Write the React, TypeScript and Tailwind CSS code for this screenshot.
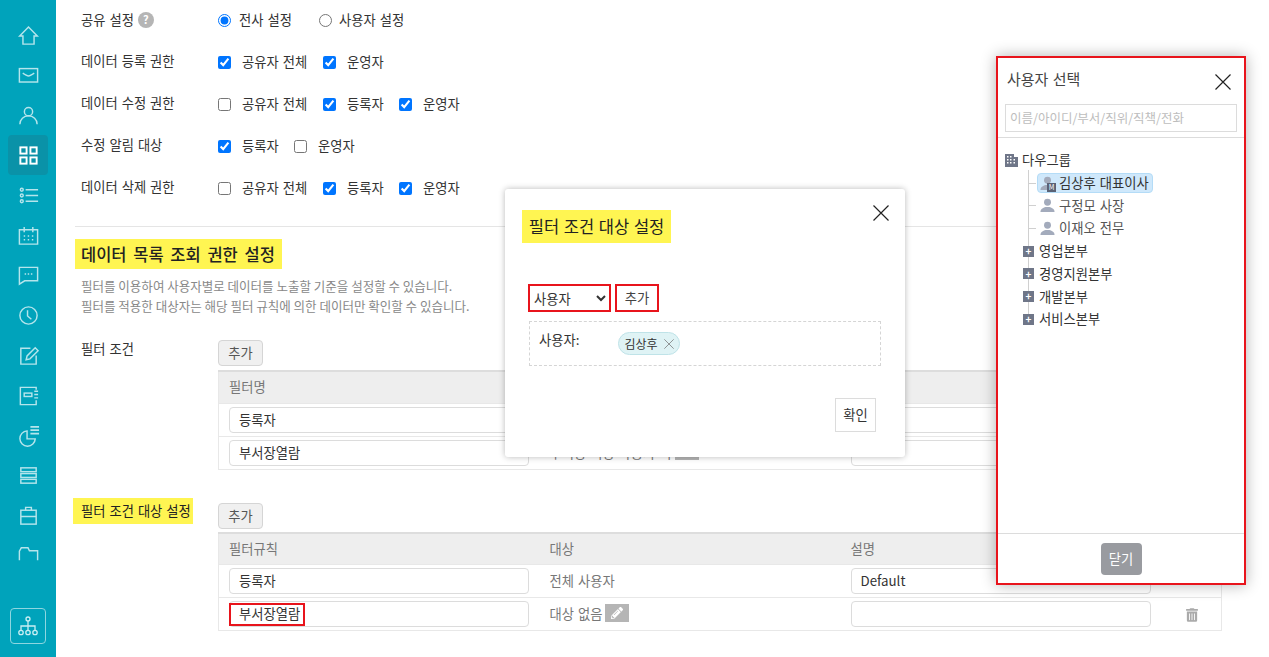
import React from "react";
import { FaTrashAlt, FaPencilAlt } from "react-icons/fa";

const Home = () => <path d="M12 3.2 2.8 12.6H6.2V21H17.8V12.6H21.2Z" />;
const Mail = () => (
  <>
    <rect x="2.5" y="4.8" width="19" height="14" />
    <path d="M6 9.5c3 2 4.5 3 6 3s3-1 6-3" />
  </>
);
const User = () => (
  <>
    <circle cx="12" cy="8" r="4.3" />
    <path d="M3 21c0-5 4-8.700 9-8.700s9 3.700 9 8.700" />
  </>
);
const Grid = () => (
  <g strokeWidth="2">
    <rect x="3.500" y="3.500" width="6.500" height="6.500" />
    <rect x="14" y="3.500" width="6.500" height="6.500" />
    <rect x="3.500" y="14" width="6.500" height="6.500" />
    <rect x="14" y="14" width="6.500" height="6.500" />
  </g>
);
const List = () => (
  <>
    <circle cx="5" cy="6" r="1.500" />
    <circle cx="5" cy="12" r="1.500" />
    <circle cx="5" cy="18" r="1.500" />
    <path d="M9 6H22M9 12H22M9 18H22" />
  </>
);
const Calendar = () => (
  <>
    <path d="M2.500 6H21.500V21H2.500ZM7.500 3V8.500M16.500 3V8.500" />
    <path d="M7 12.500h1.500M11.200 12.500h1.500M15.500 12.500h1.500M7 16.500h1.500M11.200 16.500h1.500M15.500 16.500h1.500" />
  </>
);
const Chat = () => (
  <>
    <path d="M2.500 3.500H21.500V17.500H8L2.500 21Z" />
    <path d="M8 10.500h1.500M11.200 10.500h1.500M14.500 10.500h1.500" />
  </>
);
const Clock = () => (
  <>
    <circle cx="12" cy="12" r="9" />
    <path d="M11 6.500V12.500L15 16" />
  </>
);
const Edit = () => (
  <>
    <path d="M14 4.500H4V21H20V12" />
    <path d="M9.500 16.500 10.500 12.500 19 4 22 7 13.500 15.500Z" />
  </>
);
const Note = () => (
  <>
    <path d="M20 6V3.500H3.500V21.500H20V17" />
    <rect x="7.500" y="9.500" width="8" height="3.500" />
    <path d="M18 7.500H22M18 11H22M18 14.500H22" />
  </>
);
const Pie = () => (
  <>
    <path d="M10.500 7.200A8 8 0 1 0 19 15.500H10.500Z" />
    <path d="M14 3H23M14 6.500H23M14 10H23" strokeWidth="1.800" />
  </>
);
const Stack = () => (
  <>
    <rect x="4" y="4" width="16" height="4" />
    <rect x="4" y="10" width="16" height="4" />
    <rect x="4" y="16" width="16" height="4" />
  </>
);
const Case = () => (
  <>
    <rect x="4" y="6.500" width="16" height="14.500" />
    <path d="M9 6.500V3.500H15V6.500M4 13H20" />
  </>
);
const Folder = () => <path d="M2.500 17V7.500L4.500 4H11.500L13 7H21.500V17" />;

const NAV = [
  { Icon: Home },
  { Icon: Mail },
  { Icon: User },
  { Icon: Grid, active: true },
  { Icon: List },
  { Icon: Calendar },
  { Icon: Chat },
  { Icon: Clock },
  { Icon: Edit },
  { Icon: Note },
  { Icon: Pie },
  { Icon: Stack },
  { Icon: Case },
  { Icon: Folder },
];

function Sidebar() {
  return (
    <nav className="w-14 h-full shrink-0 bg-[#00a3bb] flex flex-col items-center pt-[15px]">
      {NAV.map(({ Icon, active }, i) => (
        <div
          key={i}
          className={
            active
              ? "w-10 h-10 shrink-0 flex items-center justify-center rounded bg-[#0a92a8] text-white"
              : "w-10 h-10 shrink-0 flex items-center justify-center text-[#b5e5ec]"
          }
        >
          <svg viewBox="0 0 24 24" fill="none" stroke="currentColor" strokeWidth="1.500" className="w-[23px] h-[23px]">
            <Icon />
          </svg>
        </div>
      ))}
      {/* org chart button */}
      <div className="mt-auto mb-[13px] w-9 h-9 rounded border border-[#8ed6e0] flex items-center justify-center text-[#c8eef3]">
        <svg viewBox="0 0 24 24" fill="none" stroke="currentColor" strokeWidth="1.300" className="w-6 h-6">
          <circle cx="12" cy="5" r="2" />
          <circle cx="5" cy="18.500" r="2.200" />
          <circle cx="12" cy="18.500" r="2.200" />
          <circle cx="19" cy="18.500" r="2.200" />
          <path d="M12 7V16.300M5 16.300V12H19V16.300" />
        </svg>
      </div>
    </nav>
  );
}

const PERMS = [
  { label: "데이터 등록 권한", opts: [["공유자 전체", true, true], ["운영자", true, false]] },
  { label: "데이터 수정 권한", opts: [["공유자 전체", false, true], ["등록자", true, false], ["운영자", true, false]] },
  { label: "수정 알림 대상", opts: [["등록자", true, false], ["운영자", false, false]] },
  { label: "데이터 삭제 권한", opts: [["공유자 전체", false, true], ["등록자", true, false], ["운영자", true, false]] },
] as const;

function PermRows() {
  return (
    <div className="-mt-px">
      <div className="h-[42px] flex items-center">
        <div className="w-[137px] flex items-center gap-1 -mt-px text-[#333]">
          공유 설정
          <span className="w-4 h-4 rounded-full bg-[#b5b5b5] text-white text-[11px] font-bold flex items-center justify-center">?</span>
        </div>
        <label className="w-[101px] flex items-center gap-2">
          <input type="radio" name="share" defaultChecked className="w-[13px] h-[13px] m-0" />
          전사 설정
        </label>
        <label className="flex items-center gap-[7px]">
          <input type="radio" name="share" className="w-[13px] h-[13px] m-0" />
          사용자 설정
        </label>
      </div>
      {PERMS.map((row) => (
        <div key={row.label} className="h-[42px] flex items-center">
          <div className="w-[137px] -mt-[3px] text-[#333]">{row.label}</div>
          {row.opts.map(([name, checked, wide]) => (
            <label key={name} className={wide ? "w-[105px] flex items-center gap-[11px]" : "w-[76px] flex items-center gap-[11px]"}>
              <input type="checkbox" defaultChecked={checked} className="w-[13px] h-[13px] m-0 shrink-0" />
              {name}
            </label>
          ))}
        </div>
      ))}
    </div>
  );
}

function Field({ value, marked }: { value?: string; marked?: boolean }) {
  return (
    <div className="relative w-[300px] h-[26px] border border-[#dcdcdc] rounded-sm px-[9px] flex items-center text-[#333] bg-white">
      {value}
      {marked && <span className="absolute -left-px top-[1px] w-[76px] h-[23px] border-2 border-[#e8141c]" />}
    </div>
  );
}

function EditBtn() {
  return (
    <span className="ml-[3px] w-[24px] h-[18px] -mt-[3px] bg-[#b5b5b5] inline-flex items-center justify-center text-white">
      <FaPencilAlt className="w-3 h-3" />
    </span>
  );
}

type Row = { name: string; marked?: boolean; target: string; edit?: boolean; desc: string; del?: boolean };

function FilterTable({ head, rows }: { head: string; rows: Row[] }) {
  return (
    <table className="w-[1003px] table-fixed border-collapse border-x border-b border-[#e8e8e8]">
      <colgroup>
        <col className="w-[321px]" />
        <col className="w-[301px]" />
        <col className="w-[321px]" />
        <col className="w-[60px]" />
      </colgroup>
      <thead>
        <tr className="h-[32px] bg-[#eeeeee] border-t-2 border-[#dddddd] text-[#777] text-left">
          <th className="font-normal px-[10px]">{head}</th>
          <th className="font-normal px-[10px]">대상</th>
          <th className="font-normal px-[10px]">설명</th>
          <th />
        </tr>
      </thead>
      <tbody>
        {rows.map((r) => (
          <tr key={r.name} className="h-[33px] border-t border-[#e8e8e8]">
            <td className="px-[10px]">
              <Field value={r.name} marked={r.marked} />
            </td>
            <td className="px-[10px] text-[#777]">
              <span className="flex items-center">
                {r.target}
                {r.edit && <EditBtn />}
              </span>
            </td>
            <td className="px-[10px]">
              <Field value={r.desc} />
            </td>
            <td className="text-center pl-[2px]">
              {r.del && <FaTrashAlt className="inline w-[12px] h-[14px] text-[#aaa]" />}
            </td>
          </tr>
        ))}
      </tbody>
    </table>
  );
}

function AddBtn() {
  return (
    <button className="block w-[45px] h-[26px] bg-[#f0f0f0] border border-[#d5d5d5] rounded-sm text-[#555]">추가</button>
  );
}

function Main() {
  return (
    <main className="flex-1 min-w-0 pl-[25px] text-[13.300px] [word-spacing:1px] text-[#333]">
      <PermRows />
      <div className="-ml-[6px] mt-[17px] w-[1147px] border-t border-[#e5e5e5]" />

      <h2 className="-ml-[6px] mt-[12px] w-[207px] h-[30px] bg-[#fff552] pl-[6px] text-[16.500px] [word-spacing:3px] font-medium flex items-center text-[#222]">
        데이터 목록 조회 권한 설정
      </h2>
      <p className="mt-[7px] text-[12.530px] [word-spacing:0] leading-5 text-[#888]">필터를 이용하여 사용자별로 데이터를 노출할 기준을 설정할 수 있습니다.</p>
      <p className="text-[12.530px] [word-spacing:0] leading-5 text-[#888]">필터를 적용한 대상자는 해당 필터 규칙에 의한 데이터만 확인할 수 있습니다.</p>

      <div className="mt-[24px] flex">
        <div className="w-[137px] pt-px leading-4 text-[#333]">필터 조건</div>
        <div>
          <AddBtn />
          <div className="mt-[4px]">
            <FilterTable
              head="필터명"
              rows={[
                { name: "등록자", target: "", desc: "", del: false },
                { name: "부서장열람", target: "부서장 이상 사용자 외", edit: true, desc: "" },
              ]}
            />
          </div>
        </div>
      </div>

      <div className="mt-[33px] flex">
        <div className="w-[137px]">
          <div className="-ml-2 -mt-[5px] w-[120px] h-[26px] bg-[#fff552] pl-2 flex items-center text-[#222]">필터 조건 대상 설정</div>
        </div>
        <div>
          <AddBtn />
          <div className="mt-[3px]">
            <FilterTable
              head="필터규칙"
              rows={[
                { name: "등록자", target: "전체 사용자", desc: "Default" },
                { name: "부서장열람", marked: true, target: "대상 없음", edit: true, desc: "", del: true },
              ]}
            />
          </div>
        </div>
      </div>
    </main>
  );
}

function CloseX({ className }: { className: string }) {
  return (
    <svg viewBox="0 0 16 16" fill="none" stroke="currentColor" strokeWidth="1.200" className={className}>
      <path d="M.5.5 15.500 15.500M15.500.5.5 15.500" />
    </svg>
  );
}

function TargetModal() {
  return (
    <div className="absolute left-[505px] top-[189px] w-[400px] h-[268px] bg-white rounded-[3px] shadow-[0_0_6px_rgba(0,0,0,0.28)] text-[13.300px] text-[#333]">
      <div className="absolute left-[17px] top-[21px] w-[149px] h-[33px] bg-[#fff552] flex items-center justify-center text-[16.500px] [word-spacing:1px] text-[#222]">
        필터 조건 대상 설정
      </div>
      <CloseX className="absolute left-[368px] top-[16px] w-4 h-4 text-[#222]" />
      <div className="absolute left-[23px] top-[95px] flex items-start gap-1">
        <select className="w-[83px] h-[28px] border-2 border-[#e8141c] bg-white text-[13.300px] text-[#333]">
          <option>사용자</option>
        </select>
        <button className="w-[44px] h-[28px] border-2 border-[#e8141c] bg-white text-[#444]">추가</button>
      </div>
      <div className="absolute left-[24px] top-[132px] w-[352px] h-[45px] border border-dashed border-[#d5d5d5] flex">
        <span className="ml-[9px] mt-[8px] w-[79px]">사용자:</span>
        <span className="mt-[10px] w-[62px] h-[23px] rounded-full bg-[#dff3f5] border border-[#bfe3e8] flex items-center justify-center gap-[6px] text-[12px]">
          김상후
          <CloseX className="w-[10px] h-[10px] text-[#777]" />
        </span>
      </div>
      <button className="absolute left-[330px] top-[209px] w-[41px] h-[34px] bg-white border border-[#dcdcdc]">확인</button>
    </div>
  );
}

function PersonIcon() {
  return (
    <svg viewBox="0 0 16 16" className="w-[15px] h-[15px] shrink-0" fill="#a3abbc">
      <circle cx="8" cy="4.500" r="3.700" />
      <path d="M.5 15c0-3.500 2.500-4.500 5.500-5.500h4c3 1 5.500 2 5.500 5.500Z" />
    </svg>
  );
}

function Plus() {
  return (
    <span className="w-[11px] h-[11px] bg-[#6f7688] shrink-0 flex items-center justify-center text-white text-[10px] leading-none font-bold">+</span>
  );
}

function UserPanel() {
  return (
    <div className="absolute left-[996px] top-[56px] w-[250px] h-[529px] bg-white border-2 border-[#e8141c] shadow-[0_0_14px_rgba(0,0,0,0.3)] flex flex-col text-[13.300px] text-[#333]">
      <div className="h-[46px] shrink-0 flex items-center pl-[9px] pr-[13px] justify-between">
        <span className="text-[15px] [word-spacing:1px] text-[#444] -mt-[3px]">사용자 선택</span>
        <CloseX className="w-4 h-4 mt-[2px] text-[#222]" />
      </div>
      <div className="px-[7px]">
        <div className="h-[28px] border border-[#dcdcdc] flex items-center pl-1 text-[12.500px] text-[#bdbdbd]">이름/아이디/부서/직위/직책/전화</div>
      </div>
      <div className="mt-[5px] border-t border-[#dcdcdc]" />

      <div className="relative flex-1 pl-[7px] pt-[11px]">
        <span className="absolute left-[30px] top-[32px] w-px h-[152px] bg-[#d0d0d0]" />
        <div className="h-[22.700px] flex items-center gap-[4px]">
          <svg viewBox="0 0 13 13" className="w-[13px] h-[13px]" fill="#6f7688">
            <path d="M0 0H9V3H13V13H0Z" />
            <path d="M2 2h1.500v1.500H2ZM5 2h1.500v1.500H5ZM2 5h1.500v1.500H2ZM5 5h1.500v1.500H5ZM8.500 5H10v1.500H8.500ZM2 8h1.500v1.500H2ZM5 8h1.500v1.500H5ZM8.500 8H10v1.500H8.500Z" fill="#fff" />
          </svg>
          다우그룹
        </div>
        <div className="h-[22.700px] flex items-center pl-[32px] relative">
          <span className="absolute left-[23px] top-[11px] w-[8px] h-px bg-[#d0d0d0]" />
          <span className="w-[116px] h-[20px] bg-[#cfe8fb] border border-[#b4dcf7] rounded-sm flex items-center pl-[2px] gap-[4px] [word-spacing:1px] relative">
            <PersonIcon />
            <span className="absolute left-[9px] top-[9px] w-[9px] h-[9px] bg-[#5a6275] text-white text-[7px] leading-[9px] text-center">M</span>
            김상후 대표이사
          </span>
        </div>
        {["구정모 사장", "이재오 전무"].map((n) => (
          <div key={n} className="h-[22.700px] flex items-center pl-[35px] gap-[4px] [word-spacing:1px] text-[#555] relative">
            <span className="absolute left-[23px] top-[11px] w-[8px] h-px bg-[#d0d0d0]" />
            <PersonIcon />
            {n}
          </div>
        ))}
        {["영업본부", "경영지원본부", "개발본부", "서비스본부"].map((n) => (
          <div key={n} className="h-[22.700px] flex items-center pl-[18px] gap-[5px] relative">
            <Plus />
            {n}
          </div>
        ))}
      </div>

      <div className="h-[50px] shrink-0 border-t border-[#dcdcdc] flex items-center justify-center">
        <button className="w-[41px] h-[32px] bg-[#999ba0] rounded-sm text-white">닫기</button>
      </div>
    </div>
  );
}

export default function App() {
  return (
    <div className="relative flex h-screen overflow-hidden bg-white font-['Noto_Sans_CJK_KR','Liberation_Sans',sans-serif]">
      <Sidebar />
      <Main />
      <TargetModal />
      <UserPanel />
    </div>
  );
}
